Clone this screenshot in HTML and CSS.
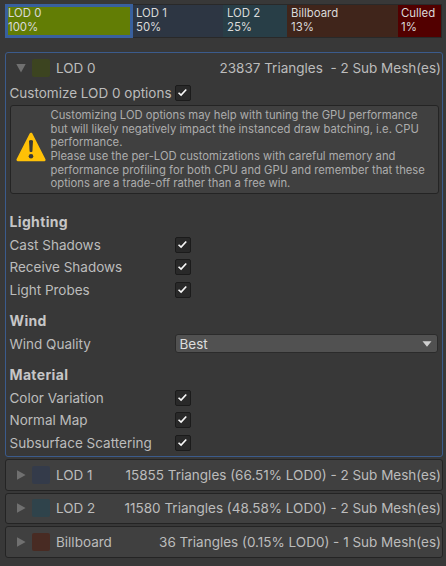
FILE: index.html
```
<!DOCTYPE html>
<html lang="en">
<head>
<meta charset="utf-8">
<title>LOD Group</title>
<link rel="stylesheet" href="styles.css">
</head>
<body>
<svg width="0" height="0" class="defs">
  <symbol id="check" viewBox="0 0 16 16"><path d="M2.9 7.7 5.8 10.4 11.7 4" fill="none" stroke="#f8f8f8" stroke-width="1.9"/></symbol>
</svg>
<div class="lod-bar">
  <div class="seg seg-0">LOD 0<br>100%</div>
  <div class="seg seg-1">LOD 1<br>50%</div>
  <div class="seg seg-2">LOD 2<br>25%</div>
  <div class="seg seg-3">Billboard<br>13%</div>
  <div class="seg seg-4">Culled<br>1%</div>
</div>

<section class="panel open">
  <header class="head">
    <svg class="arrow" viewBox="0 0 10 10"><path d="M.3 1H9.7L5 9.5Z"/></svg>
    <i class="swatch green"></i><span class="name">LOD 0</span>
    <span class="stats">23837 Triangles&nbsp; - 2 Sub Mesh(es)</span>
  </header>
  <div class="row custom"><span class="label">Customize LOD 0 options</span><svg class="box"><use href="#check"/></svg></div>
  <div class="help">
    <svg class="warn" viewBox="0 0 30 30"><path d="M15 2.2 28 27.8H2Z" fill="#ffc107" stroke="#ffc107" stroke-width="3" stroke-linejoin="round"/><path d="M13 8.8Q15 7 17 8.8L16.4 19.5Q15 20.6 13.6 19.5Z" fill="#383838"/><circle cx="15" cy="24.3" r="2.3" fill="#383838"/></svg>
    <p>Customizing LOD options may help with tuning the GPU performance<br>but will likely negatively impact the instanced draw batching, i.e. CPU<br>performance.<br>Please use the per-LOD customizations with careful memory and<br>performance profiling for both CPU and GPU and remember that these<br>options are a trade-off rather than a free win.</p>
  </div>
  <div class="group first">
    <h2>Lighting</h2>
    <div class="row"><span class="label">Cast Shadows</span><svg class="box"><use href="#check"/></svg></div>
    <div class="row"><span class="label">Receive Shadows</span><svg class="box"><use href="#check"/></svg></div>
    <div class="row"><span class="label">Light Probes</span><svg class="box"><use href="#check"/></svg></div>
  </div>
  <div class="group">
    <h2>Wind</h2>
    <div class="row"><span class="label">Wind Quality</span><div class="select">Best<svg viewBox="0 0 10 6"><path d="M.5 .3H9.5L5 5.7Z"/></svg></div></div>
  </div>
  <div class="group">
    <h2>Material</h2>
    <div class="row"><span class="label">Color Variation</span><svg class="box"><use href="#check"/></svg></div>
    <div class="row"><span class="label">Normal Map</span><svg class="box"><use href="#check"/></svg></div>
    <div class="row"><span class="label">Subsurface Scattering</span><svg class="box"><use href="#check"/></svg></div>
  </div>
</section>

<section class="panel closed">
  <header class="head"><svg class="arrow" viewBox="0 0 10 10"><path d="M1 .3V9.7L9.6 5Z"/></svg><i class="swatch navy"></i><span class="name">LOD 1</span><span class="stats">15855 Triangles (66.51% LOD0) - 2 Sub Mesh(es)</span></header>
</section>
<section class="panel closed">
  <header class="head"><svg class="arrow" viewBox="0 0 10 10"><path d="M1 .3V9.7L9.6 5Z"/></svg><i class="swatch teal"></i><span class="name">LOD 2</span><span class="stats">11580 Triangles (48.58% LOD0) - 2 Sub Mesh(es)</span></header>
</section>
<section class="panel closed">
  <header class="head"><svg class="arrow" viewBox="0 0 10 10"><path d="M1 .3V9.7L9.6 5Z"/></svg><i class="swatch brown"></i><span class="name">Billboard</span><span class="stats">36 Triangles (0.15% LOD0) - 1 Sub Mesh(es)</span></header>
</section>
</body>
</html>
```
FILE: styles.css
```
* { box-sizing: border-box; }
body {
  margin: 0;
  padding: 4px 3px 0 5px;
  height: 566px;
  overflow: hidden;
  background: #383838;
  color: #bcbcbc;
  font: 13.5px/20px Inter, "Liberation Sans", sans-serif;
  white-space: nowrap;
}
.defs { position: absolute; }
.lod-bar {
  display: grid;
  grid-template-columns: 128px 90px 64px 111px 44px;
  height: 34px;
  margin-bottom: 14px;
  color: #dadada;
  font-size: 11.4px;
  line-height: 13.6px;
}
.seg { padding: 2px 0 0 3px; border: solid #292929; border-width: 1px 0; }
.seg-0 { background: #627d05; border: 3px solid #39609d; padding: 0; }
.seg-1 { background: #2d3643; }
.seg-2 { background: #283e47; padding-left: 4px; }
.seg-3 { background: #40251b; padding-left: 4px; }
.seg-4 { background: #520000; border-right-width: 1px; }

.panel { border: 1px solid #242424; border-radius: 3px; }
.open { height: 405px; border-color: #3b5b8c; margin-bottom: 2px; }
.closed { height: 31.5px; background: #404040; margin-bottom: 2.2px; }
.head { display: flex; align-items: center; height: 29px; padding: 0 1px 0 10px; }
.arrow { width: 10px; height: 10px; margin-right: 6px; fill: #707070; }
.swatch { width: 18px; height: 18px; border-radius: 2px; margin-right: 6px; }
.green { background: #3c4420; }
.navy { background: #343b4a; }
.teal { background: #2f434b; }
.brown { background: #482b23; }
.stats { margin-left: auto; }

.row { display: flex; align-items: center; height: 22.5px; padding-left: 3.5px; }
.custom { height: 21px; margin-top: .5px; }
.label { width: 165px; }
.box { width: 16px; height: 16px; background: #292929; border: 1px solid #1b1b1b; border-radius: 2px; }
.help {
  display: flex;
  align-items: center;
  width: 429px;
  height: 89px;
  margin: 1px 0 0 4px;
  padding-left: 5px;
  border: 1px solid #242424;
  border-radius: 3px;
  background: #404040;
}
.warn { flex: none; width: 30px; height: 30px; margin-right: 4.5px; position: relative; top: -2px; }
.help p { margin: 0; padding-top: 2px; font-size: 11.25px; line-height: 13.65px; color: #adadad; }
.group { margin-top: 9px; }
.first { margin-top: 17.5px; }
h2 { margin: 0; padding-left: 3.5px; font-size: 14px; font-weight: 700; letter-spacing: .35px; line-height: 22.5px; color: #c6c6c6; }
.select {
  display: flex;
  align-items: center;
  justify-content: space-between;
  width: 263px;
  height: 19px;
  padding: 0 5px 0 4px;
  border: 1px solid #2b2b2b;
  border-radius: 3px;
  background: #515151;
  color: #dddddd;
}
.select svg { width: 10px; height: 6px; fill: #d0d0d0; }
```
